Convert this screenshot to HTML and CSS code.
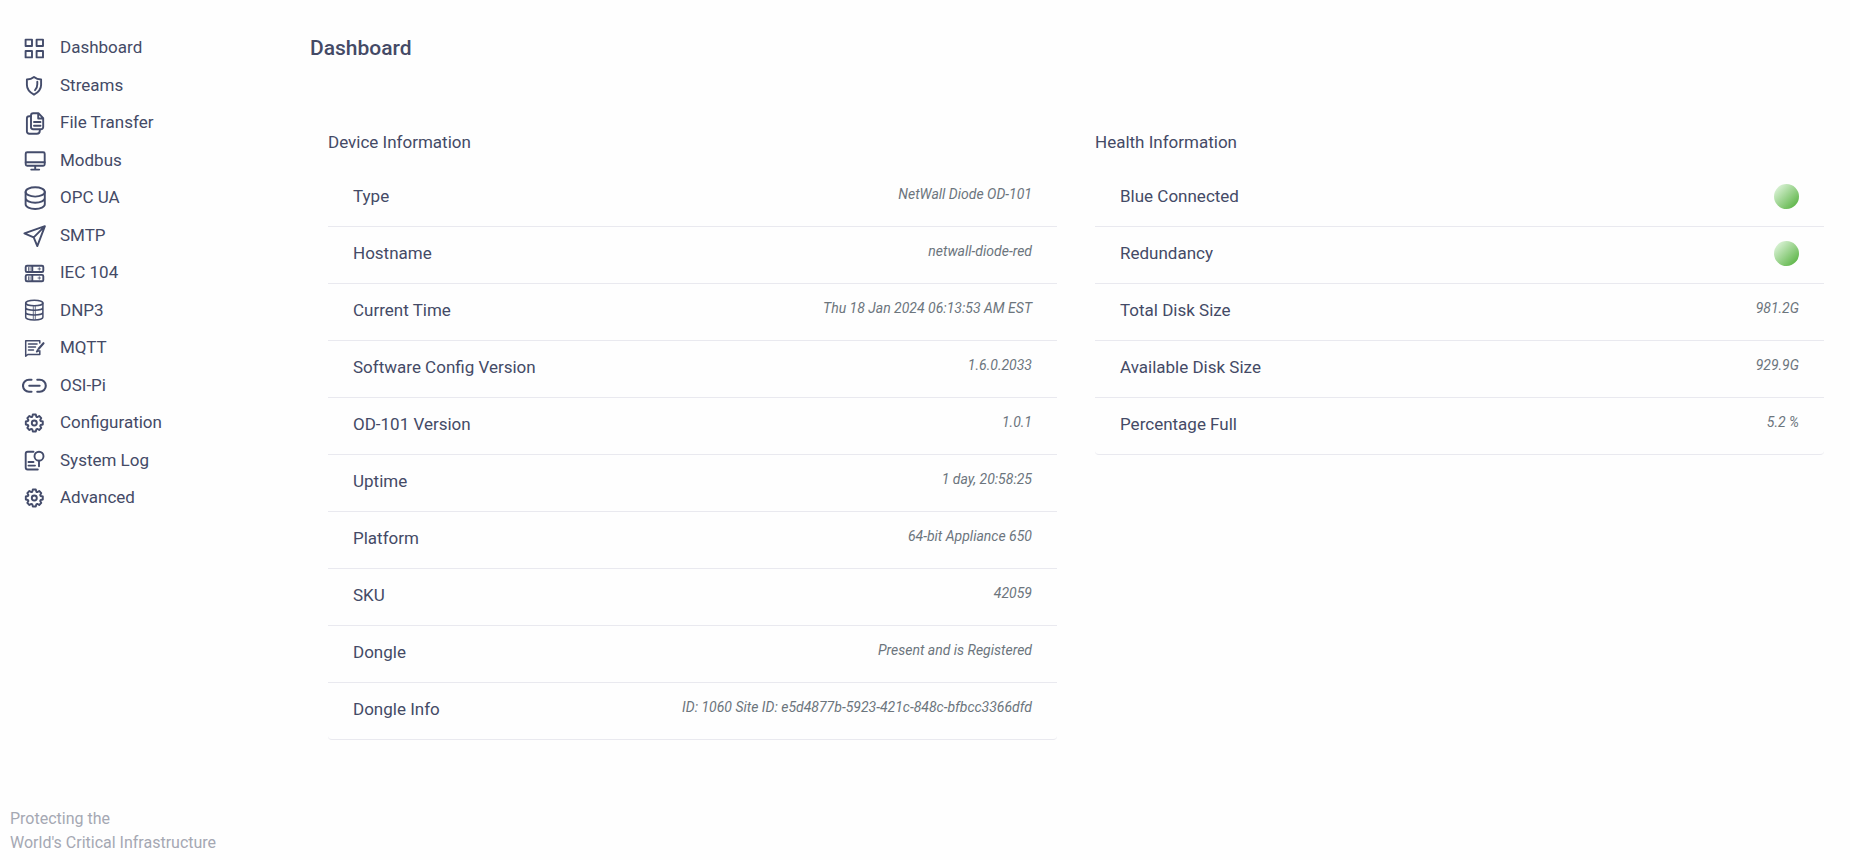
FILE: index.html
```html
<!DOCTYPE html>
<html lang="en">
<head>
<meta charset="utf-8">
<title>Dashboard</title>
<link rel="stylesheet" href="styles.css">
</head>
<body>
<svg class="defs" width="0" height="0" aria-hidden="true">
  <symbol id="gear" viewBox="0 0 26 26">
    <g transform="translate(12.3 13)">
      <path d="M8.5-1.5V1.5L6.4 2Q5.9 2.4 5.9 3L7 4.9 4.9 7 3 5.9Q2.4 5.9 2 6.4L1.5 8.5H-1.5L-2 6.4Q-2.4 5.9-3 5.9L-4.9 7-7 4.9-5.9 3Q-5.9 2.4-6.4 2L-8.5 1.5V-1.5L-6.4-2Q-5.9-2.4-5.9-3L-7-4.9-4.9-7-3-5.9Q-2.4-5.9-2-6.4L-1.5-8.5H1.5L2-6.4Q2.4-5.9 3-5.9L4.9-7 7-4.9 5.9-3Q5.9-2.4 6.4-2Z"/>
      <circle r="2.5"/>
    </g>
  </symbol>
</svg>
<div class="app">
  <aside class="sidebar">
    <nav aria-label="Main">
      <ul class="menu">
        <li><a class="menu-link" href="#dashboard"><svg class="icon" viewBox="0 0 26 26"><path d="M3.6 4.6h6.4v6.4H3.6zM14.6 4.6H21v6.4h-6.4zM3.6 16H10v6.4H3.6zM14.6 16H21v6.4h-6.4z"/></svg>Dashboard</a></li>
        <li><a class="menu-link" href="#streams"><svg class="icon" viewBox="0 0 26 26"><path d="M12 5C14 6.6 16.4 7.4 19.1 7.5V13c0 4.6-2.8 7.3-7.1 9.7C7.7 20.3 4.9 17.6 4.9 13V7.5C7.6 7.4 10 6.6 12 5z"/><path d="M15.3 9.8v2.4c0 2.6-.7 4.4-2.3 6"/></svg>Streams</a></li>
        <li><a class="menu-link" href="#file-transfer"><svg class="icon" viewBox="0 0 26 26"><path d="M11.2 3.2h5.2l4.8 5v8.9a2.2 2.2 0 0 1-2.2 2.2h-7.8A2.2 2.2 0 0 1 9 17.100V5.400a2.200 2.200 0 0 1 2.200-2.200zM16.200 3.500v5h4.800"/><path d="M9 6.300H7.200A2.300 2.300 0 0 0 4.900 8.600v12.800a2.300 2.300 0 0 0 2.300 2.300h7.600a3 3 0 0 0 3-3v-1M12 12h6.500M12 15.800h6.500"/></svg>File Transfer</a></li>
        <li><a class="menu-link" href="#modbus"><svg class="icon" viewBox="0 0 26 26"><rect x="3.700" y="5.200" width="19" height="13.500" rx="1.500"/><path d="M3.700 15.200h19M13.200 19v3.500M9.200 22.600h8"/></svg>Modbus</a></li>
        <li><a class="menu-link" href="#opc-ua"><svg class="icon" viewBox="0 0 26 26"><ellipse cx="13.200" cy="6.900" rx="9.600" ry="4.700"/><path d="M3.600 6.900v12.400c0 2.600 4.300 4.700 9.600 4.700s9.600-2.100 9.600-4.700V6.900M3.600 13.100c0 2.600 4.300 4.700 9.600 4.700s9.600-2.100 9.600-4.700"/></svg>OPC UA</a></li>
        <li><a class="menu-link" href="#smtp"><svg class="icon" viewBox="0 0 26 26"><path d="M2.400 11.400L22.900 4.200 15.300 24.100 11.700 15.400zM22.900 4.200L11.700 15.400"/></svg>SMTP</a></li>
        <li><a class="menu-link" href="#iec-104"><svg class="icon" viewBox="0 0 26 26"><rect x="3.700" y="5.700" width="17.600" height="6.300" rx="1.300"/><rect x="3.700" y="14.900" width="17.600" height="6.300" rx="1.300"/><path d="M10.300 6v6M10.300 15v6"/><path class="thin" d="M6.500 7.500v3M8 7.500v3M6.500 16.700v3M8 16.700v3M17.300 7.600v2.600M16 8.900h2.600M17.300 16.700v2.600M16 18h2.600"/></svg>IEC 104</a></li>
        <li><a class="menu-link" href="#dnp3"><svg class="icon" viewBox="0 0 26 26"><g class="mid"><ellipse cx="12.300" cy="6" rx="8.600" ry="2.800"/><path d="M3.700 6v14.300c0 1.500 3.800 2.700 8.600 2.700s8.600-1.200 8.600-2.700V6M3.700 10.500c0 1.600 3.800 2.800 8.600 2.800s8.600-1.200 8.600-2.800M3.700 15.200c0 1.600 3.800 2.800 8.600 2.800s8.600-1.200 8.600-2.800"/></g><path class="thin" d="M11.300 9.500v12.500M13.300 9.500v12.500"/></svg>DNP3</a></li>
        <li><a class="menu-link" href="#mqtt"><svg class="icon" viewBox="0 0 26 26"><g class="mid"><path d="M17.800 8V5.700H3.700v15.600l2.100-1.800h12v-3.700M6.500 9h8.500M6.500 12h7M6.500 15h5"/></g><path class="bold" d="M21.500 8.200l-4.800 5.600"/><path class="mid" d="M15.600 14.800l-1 2 1.800-.8z"/></svg>MQTT</a></li>
        <li><a class="menu-link" href="#osi-pi"><svg class="icon" viewBox="0 0 26 26"><path class="bold" d="M9.500 7.700H7a6 6 0 0 0 0 12h2.500M15.300 7.700h2.500a6 6 0 0 1 0 12h-2.500M7.300 13.700h10.300"/></svg>OSI-Pi</a></li>
        <li><a class="menu-link" href="#configuration"><svg class="icon" viewBox="0 0 26 26"><use href="#gear"/></svg>Configuration</a></li>
        <li><a class="menu-link" href="#system-log"><svg class="icon" viewBox="0 0 26 26"><path d="M11.500 4.800H5.700a2 2 0 0 0-2 2v13.700a2 2 0 0 0 2 2h10.100M6.500 15h5M6.500 18.600h6.500M17 13.700v5.500"/><circle cx="17" cy="9.200" r="4.500"/></svg>System Log</a></li>
        <li><a class="menu-link" href="#advanced"><svg class="icon" viewBox="0 0 26 26"><use href="#gear"/></svg>Advanced</a></li>
      </ul>
    </nav>
    <p class="tagline">Protecting the<br>World's Critical Infrastructure</p>
  </aside>
  <main class="main">
    <h1 class="title">Dashboard</h1>
    <div class="panels">
      <section class="panel">
        <h2 class="panel-title">Device Information</h2>
        <dl class="list">
          <div class="row"><dt>Type</dt><dd>NetWall Diode OD-101</dd></div>
          <div class="row"><dt>Hostname</dt><dd>netwall-diode-red</dd></div>
          <div class="row"><dt>Current Time</dt><dd>Thu 18 Jan 2024 06:13:53 AM EST</dd></div>
          <div class="row"><dt>Software Config Version</dt><dd>1.6.0.2033</dd></div>
          <div class="row"><dt>OD-101 Version</dt><dd>1.0.1</dd></div>
          <div class="row"><dt>Uptime</dt><dd>1 day, 20:58:25</dd></div>
          <div class="row"><dt>Platform</dt><dd>64-bit Appliance 650</dd></div>
          <div class="row"><dt>SKU</dt><dd>42059</dd></div>
          <div class="row"><dt>Dongle</dt><dd>Present and is Registered</dd></div>
          <div class="row"><dt>Dongle Info</dt><dd>ID: 1060 Site ID: e5d4877b-5923-421c-848c-bfbcc3366dfd</dd></div>
        </dl>
      </section>
      <section class="panel">
        <h2 class="panel-title">Health Information</h2>
        <dl class="list">
          <div class="row"><dt>Blue Connected</dt><dd class="status"><span class="light" role="img" aria-label="OK"></span></dd></div>
          <div class="row"><dt>Redundancy</dt><dd class="status"><span class="light" role="img" aria-label="OK"></span></dd></div>
          <div class="row"><dt>Total Disk Size</dt><dd>981.2G</dd></div>
          <div class="row"><dt>Available Disk Size</dt><dd>929.9G</dd></div>
          <div class="row"><dt>Percentage Full</dt><dd>5.2 %</dd></div>
        </dl>
      </section>
    </div>
  </main>
</div>
</body>
</html>
```
FILE: styles.css
```css
* {
  box-sizing: border-box;
}

body {
  margin: 0;
  background: #fefefe;
  color: #444a66;
  font-family: Roboto, "Liberation Sans", sans-serif;
  font-size: 17px;
  line-height: 1.5;
}

.defs {
  position: absolute;
}

.app {
  display: grid;
  grid-template-columns: 310px minmax(0, 1fr);
  min-height: 100vh;
}

.sidebar {
  display: flex;
  flex-direction: column;
  justify-content: space-between;
  padding: 29px 10px 5px;
}

.menu {
  margin: 0;
  padding: 0 0 0 12px;
  list-style: none;
}

.menu-link {
  display: flex;
  align-items: center;
  gap: 12px;
  padding: 6px 0;
  color: inherit;
  text-decoration: none;
}

.icon {
  flex: none;
  width: 26px;
  height: 26px;
  margin: -2px 0;
  fill: none;
  stroke: #444c6b;
  stroke-width: 1.9;
  stroke-linecap: round;
  stroke-linejoin: round;
}

.icon .thin {
  stroke-width: 0.8;
}

.icon .mid {
  stroke-width: 1.5;
}

.icon .bold {
  stroke-width: 2.1;
}

.tagline {
  margin: 0;
  color: #a5a8b3;
  font-size: 16px;
  line-height: 24px;
}

.main {
  padding: 32px 26px 32px 0;
}

.title {
  margin: 0;
  font-size: 21px;
  font-weight: 500;
  line-height: 32px;
}

.panels {
  display: grid;
  grid-template-columns: repeat(2, minmax(0, 1fr));
  gap: 38px;
  padding: 64px 0 0 18px;
}

.panel-title {
  margin: 0;
  font-size: 17px;
  font-weight: 400;
  line-height: 28px;
}

.list {
  margin: 14px 0 0;
}

.row {
  display: flex;
  justify-content: space-between;
  height: 57px;
  padding: 14px 25px 0;
  border-bottom: 1px solid #e9e9ef;
}

.row:last-child {
  border-radius: 0 0 4px 4px;
}

.row dd {
  margin: 0;
  color: #6c757d;
  font-size: 14px;
  font-style: italic;
  line-height: 20px;
}

.light {
  display: block;
  width: 25px;
  height: 25px;
  border-radius: 50%;
  background: linear-gradient(135deg, #e4f7e1 5%, #5bb445 90%);
}
```
